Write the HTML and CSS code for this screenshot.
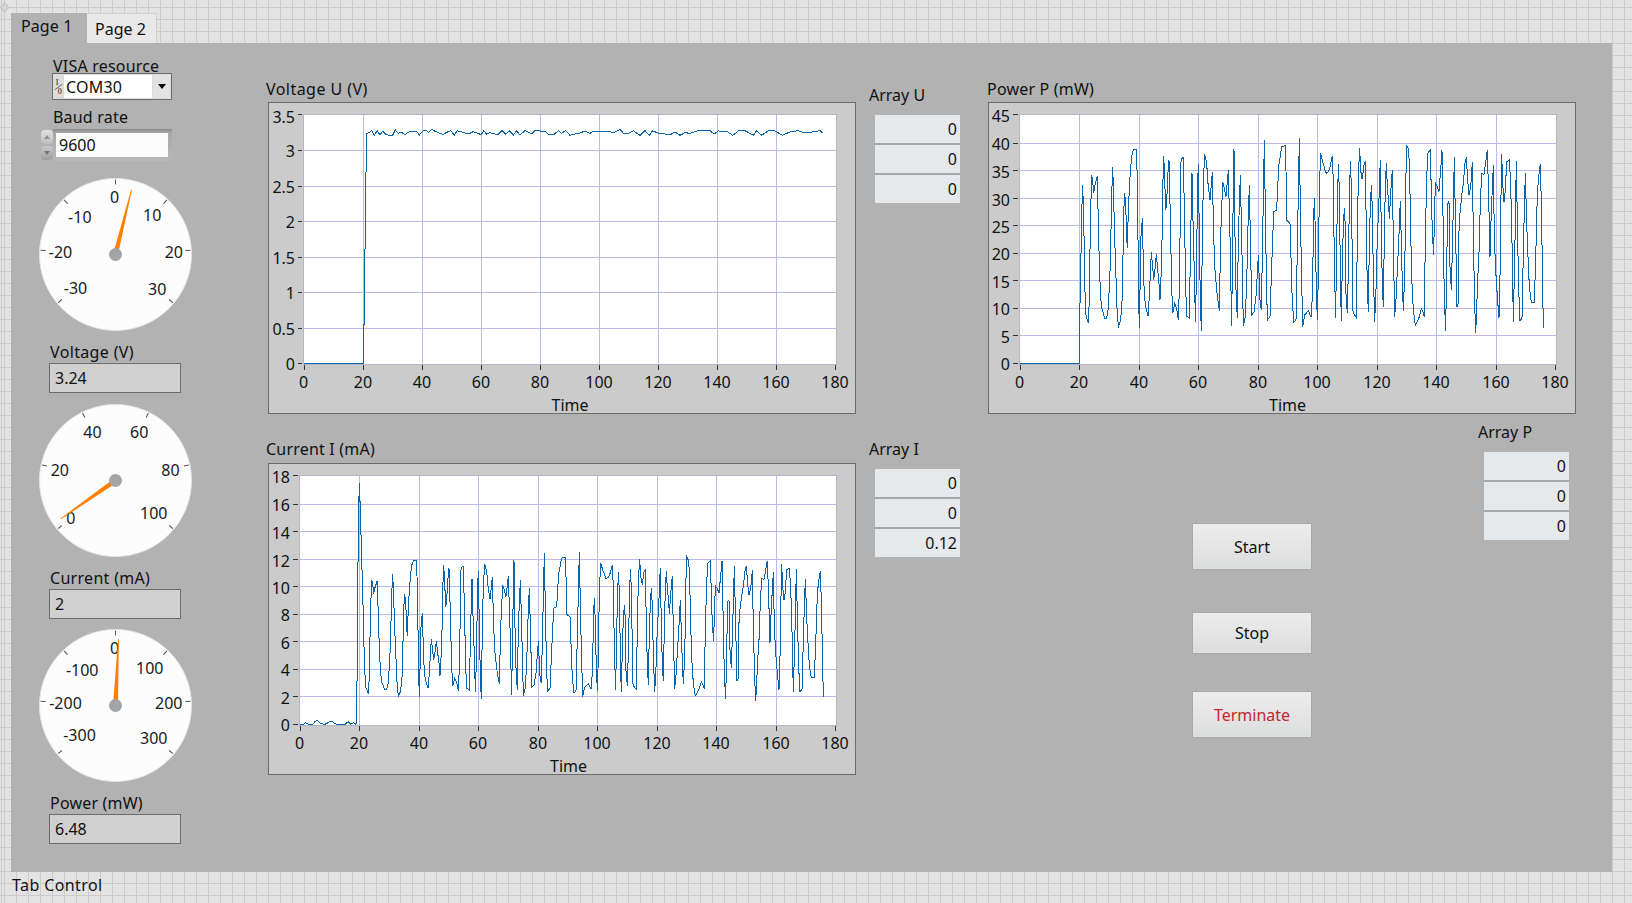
FILE: index.html
```html
<!DOCTYPE html>
<html lang="en">
<head>
<meta charset="utf-8">
<title>Front Panel</title>
<link rel="stylesheet" href="styles.css">
</head>
<body>
<div class="origin-mark"></div>
<div class="tabs">
  <div class="tab tab-active">Page 1</div>
  <div class="tab tab-idle">Page 2</div>
</div>
<main class="panel">
  <section class="sidebar">
    <div class="lbl visa-label">VISA resource</div>
    <div class="visa">
      <svg class="io" viewBox="0 0 10 23"><text class="io-t" x="3.5" y="10">I</text><line x1="1" y1="15" x2="9" y2="9" class="io-s"/><text class="io-t" x="6.5" y="20">0</text></svg>
      <div class="visa-val">COM30</div>
      <div class="visa-btn"><span class="arrow"></span></div>
    </div>
    <div class="lbl baud-label">Baud rate</div>
    <div class="baud">
      <div class="spin"><div class="spin-b spin-up"><span></span></div><div class="spin-b spin-dn"><span></span></div></div>
      <div class="baud-box"><div class="baud-val">9600</div></div>
    </div>

    <svg class="gauge g1" viewBox="-76.5 -76.5 153 153">
      <circle class="dial" r="76"/>
      <g class="ticks">
        <line y1="-75" y2="-70"/><line y1="-75" y2="-70" transform="rotate(43.3)"/><line y1="-75" y2="-70" transform="rotate(86.7)"/><line y1="-75" y2="-70" transform="rotate(130)"/><line y1="-75" y2="-70" transform="rotate(-43.3)"/><line y1="-75" y2="-70" transform="rotate(-86.7)"/><line y1="-75" y2="-70" transform="rotate(-130)"/>
      </g>
      <g class="gl">
        <text x="-1" y="-57.3">0</text><text x="-35.7" y="-37.3">-10</text><text x="36.7" y="-39.7">10</text><text x="-55" y="-3">-20</text><text x="58.3" y="-3">20</text><text x="-40" y="33">-30</text><text x="41.7" y="34">30</text>
      </g>
      <polygon class="needle" points="2.4,.6 -2.4,-.6 15.6,-64.8 16.4,-64.6"/>
      <circle class="hub" r="6.5"/>
    </svg>
    <div class="lbl ro-label first-ro">Voltage (V)</div>
    <div class="ro">3.24</div>

    <svg class="gauge g2" viewBox="-76.5 -76.5 153 153">
      <circle class="dial" r="76"/>
      <g class="ticks">
        <line y1="-75" y2="-70" transform="rotate(-130)"/><line y1="-75" y2="-70" transform="rotate(-78)"/><line y1="-75" y2="-70" transform="rotate(-26)"/><line y1="-75" y2="-70" transform="rotate(26)"/><line y1="-75" y2="-70" transform="rotate(78)"/><line y1="-75" y2="-70" transform="rotate(130)"/>
      </g>
      <g class="gl">
        <text x="-23" y="-49">40</text><text x="23.7" y="-49">60</text><text x="-55.7" y="-11">20</text><text x="55" y="-11">80</text><text x="-44.7" y="37.3">0</text><text x="38.3" y="32.7">100</text>
      </g>
      <polygon class="needle" points="1.4,2 -1.4,-2 -54.9,37.9 -54.5,38.7"/>
      <circle class="hub" r="6.5"/>
    </svg>
    <div class="lbl ro-label ro-wide">Current (mA)</div>
    <div class="ro">2</div>

    <svg class="gauge g3" viewBox="-76.5 -76.5 153 153">
      <circle class="dial" r="76"/>
      <g class="ticks">
        <line y1="-75" y2="-70"/><line y1="-75" y2="-70" transform="rotate(43.3)"/><line y1="-75" y2="-70" transform="rotate(86.7)"/><line y1="-75" y2="-70" transform="rotate(130)"/><line y1="-75" y2="-70" transform="rotate(-43.3)"/><line y1="-75" y2="-70" transform="rotate(-86.7)"/><line y1="-75" y2="-70" transform="rotate(-130)"/>
      </g>
      <g class="gl">
        <text x="-1" y="-57.3">0</text><text x="-33.3" y="-36">-100</text><text x="34.3" y="-38">100</text><text x="-50" y="-3">-200</text><text x="53.3" y="-3">200</text><text x="-36" y="29.5">-300</text><text x="38.3" y="32">300</text>
      </g>
      <polygon class="needle" points="2.5,.1 -2.5,-.1 2.6,-66.4 3.4,-66.4"/>
      <circle class="hub" r="6.5"/>
    </svg>
    <div class="lbl ro-label">Power (mW)</div>
    <div class="ro">6.48</div>
  </section>

  <section class="charts">
    <div class="lbl chart-label chart-label-u">Voltage U (V)</div>
    <svg class="chart" viewBox="269 103 586 310">
      <rect class="plot" x="303.5" y="114.5" width="533" height="250"/>
      <g class="grid">
        <path d="M363.5 115V364M422.5 115V364M481.5 115V364M540.5 115V364M599.5 115V364M658.5 115V364M717.5 115V364M776.5 115V364"/>
        <path d="M304 150.5H836M304 186.5H836M304 221.5H836M304 257.5H836M304 292.5H836M304 328.5H836"/>
      </g>
      <path class="tick" d="M298 114.5H302M298 150.5H302M298 186.5H302M298 221.5H302M298 257.5H302M298 292.5H302M298 328.5H302M298 363.5H302M304.5 365V370M363.5 365V370M422.5 365V370M481.5 365V370M540.5 365V370M599.5 365V370M658.5 365V370M717.5 365V370M776.5 365V370M835.5 365V370"/>
      <g class="yl">
        <text x="295" y="116.5">3.5</text><text x="295" y="151">3</text><text x="295" y="187">2.5</text><text x="295" y="222">2</text><text x="295" y="258">1.5</text><text x="295" y="293">1</text><text x="295" y="329">0.5</text><text x="295" y="364">0</text>
      </g>
      <g class="xl">
        <text x="303.5" y="382">0</text><text x="363" y="382">20</text><text x="422" y="382">40</text><text x="481" y="382">60</text><text x="540" y="382">80</text><text x="599" y="382">100</text><text x="658" y="382">120</text><text x="717" y="382">140</text><text x="776" y="382">160</text><text x="835" y="382">180</text>
        <text x="570" y="405">Time</text>
      </g>
      <g transform="translate(260 70) scale(.33333)">
        <polyline class="trace" points="131,880 310,880 310,765 313,765 313,540 316,535 316,310 319,305 319,190 327,188 335,182 343,195 352,182 360,195 368,184 376,192 385,195 398,196 406,180 415,190 425,187 435,195 443,187 455,184 470,184 478,195 488,183 497,180 506,187 515,178 525,184 540,190 550,193 560,187 572,182 583,195 592,182 605,186 625,192 640,185 655,190 663,195 672,182 680,193 690,188 705,192 715,193 726,182 738,193 748,182 760,195 770,182 780,195 795,182 805,186 815,192 825,182 855,184 868,195 880,195 895,182 905,190 917,182 930,196 945,192 958,190 975,183 990,190"/>
      </g>
      <g transform="translate(590 70) scale(.33333)">
        <polyline class="trace" points="0,190 8,185 28,186 40,185 60,185 72,188 90,178 102,192 115,190 130,182 150,196 165,182 178,196 188,182 205,190 225,192 240,195 255,186 270,196 285,188 300,190 320,183 340,183 360,182 372,192 385,183 410,184 428,196 445,183 465,182 490,196 500,182 515,196 535,182 555,183 577,196 590,190 600,186 625,182 642,188 665,186 690,182 700,190"/>
      </g>
    </svg>

    <div class="lbl chart-label second">Current I (mA)</div>
    <svg class="chart" viewBox="269 463 586 310">
      <rect class="plot" x="299.5" y="474.5" width="537" height="250"/>
      <g class="grid">
        <path d="M359.5 475V724M419.5 475V724M478.5 475V724M538.5 475V724M597.5 475V724M657.5 475V724M716.5 475V724M776.5 475V724"/>
        <path d="M300 503.5H836M300 530.5H836M300 558.5H836M300 585.5H836M300 613.5H836M300 640.5H836M300 668.5H836M300 695.5H836"/>
      </g>
      <path class="tick" d="M293 474.5H298M293 503.5H298M293 530.5H298M293 558.5H298M293 585.5H298M293 613.5H298M293 640.5H298M293 668.5H298M293 695.5H298M293 723.5H298M300.5 725V730M359.5 725V730M419.5 725V730M478.5 725V730M538.5 725V730M597.5 725V730M657.5 725V730M716.5 725V730M776.5 725V730M835.5 725V730"/>
      <g class="yl">
        <text x="290" y="475.5">18</text><text x="290" y="503.5">16</text><text x="290" y="531.5">14</text><text x="290" y="559.5">12</text><text x="290" y="586.5">10</text><text x="290" y="613.5">8</text><text x="290" y="641.5">6</text><text x="290" y="668.5">4</text><text x="290" y="696.5">2</text><text x="290" y="723.5">0</text>
      </g>
      <g class="xl">
        <text x="299.5" y="742">0</text><text x="359" y="742">20</text><text x="419" y="742">40</text><text x="478" y="742">60</text><text x="538" y="742">80</text><text x="597" y="742">100</text><text x="657" y="742">120</text><text x="716" y="742">140</text><text x="776" y="742">160</text><text x="835" y="742">180</text>
        <text x="568.5" y="765">Time</text>
      </g>
      <g transform="translate(260 430) scale(.33333)">
        <polyline class="trace" points="119,880 130,880 137,875 145,880 158,880 165,872 173,868 181,878 195,880 208,873 215,870 225,878 232,880 255,880 265,872 272,880 280,875 288,880 291,760 293,520 295,280 298,155 300,210 303,310 306,415 309,520 311,610 314,720 318,770 325,788"/>
        <g transform="translate(0 205.04) scale(1 .767)"><use href="#p-body1"/></g>
      </g>
      <g transform="translate(580 430) scale(.33333)">
        <g transform="translate(0 205.04) scale(1 .767)"><use href="#p-body2"/></g>
      </g>
    </svg>
  </section>

  <section class="arrays">
    <div class="array">
      <div class="lbl array-label">Array U</div>
      <div class="cells"><div class="cell">0</div><div class="cell">0</div><div class="cell">0</div></div>
    </div>
    <div class="array array-i">
      <div class="lbl array-label">Array I</div>
      <div class="cells"><div class="cell">0</div><div class="cell">0</div><div class="cell">0.12</div></div>
    </div>
  </section>

  <section class="right">
    <div class="lbl chart-label">Power P (mW)</div>
    <svg class="chart power" viewBox="989 103 586 310">
      <rect class="plot" x="1019.5" y="114.5" width="537" height="250"/>
      <g class="grid">
        <path d="M1079.5 115V364M1139.5 115V364M1198.5 115V364M1258.5 115V364M1317.5 115V364M1377.5 115V364M1436.5 115V364M1496.5 115V364"/>
        <path d="M1020 143.5H1556M1020 170.5H1556M1020 198.5H1556M1020 225.5H1556M1020 253.5H1556M1020 280.5H1556M1020 308.5H1556M1020 335.5H1556"/>
      </g>
      <path class="tick" d="M1013 114.5H1018M1013 143.5H1018M1013 170.5H1018M1013 198.5H1018M1013 225.5H1018M1013 253.5H1018M1013 280.5H1018M1013 308.5H1018M1013 335.5H1018M1013 363.5H1018M1020.5 365V370M1079.5 365V370M1139.5 365V370M1198.5 365V370M1258.5 365V370M1317.5 365V370M1377.5 365V370M1436.5 365V370M1496.5 365V370M1555.5 365V370"/>
      <g class="yl">
        <text x="1010" y="116">45</text><text x="1010" y="144">40</text><text x="1010" y="172">35</text><text x="1010" y="200">30</text><text x="1010" y="227">25</text><text x="1010" y="254">20</text><text x="1010" y="282">15</text><text x="1010" y="309">10</text><text x="1010" y="337">5</text><text x="1010" y="364">0</text>
      </g>
      <g class="xl">
        <text x="1019.5" y="382">0</text><text x="1079" y="382">20</text><text x="1139" y="382">40</text><text x="1198" y="382">60</text><text x="1258" y="382">80</text><text x="1317" y="382">100</text><text x="1377" y="382">120</text><text x="1436" y="382">140</text><text x="1496" y="382">160</text><text x="1555" y="382">180</text>
        <text x="1287.5" y="405">Time</text>
      </g>
      <g transform="translate(980 70) scale(.33333)">
        <polyline class="trace" points="119,880 298,880 298,795 302,610 305,435 308,345 310,410 313,540 315,665 318,735 322,750 325,760"/>
        <polyline class="trace" id="p-body1" points="325,760 328,690 330,540 333,390 335,315 338,330 341,370 345,345 352,318 356,510 360,635 364,710 370,730 374,745 380,745 385,715 390,605 393,480 396,350 398,292 400,350 403,460 406,570 409,650 412,745 416,767 422,750 427,680 429,560 431,430 434,370 437,400 440,500 442,535 445,420 449,340 452,290 456,255 460,240 469,240 472,330 474,505 476,685 478,773 481,610 483,500 487,445 490,580 493,680 498,715 504,738 508,680 511,610 514,547 518,590 521,630 526,590 529,553 533,600 537,640 540,690 544,600 547,470 550,258 553,290 557,420 560,400 563,320 567,270 570,400 572,500 575,650 578,730 584,700 590,715 595,750 599,630 602,280 606,265 610,262 614,470 617,650 620,738 628,745 632,500 636,310 640,500 644,640 646,755 650,600 652,365 655,282 658,500 661,690 664,782 667,500 670,340 674,252 680,280 684,340 690,390 697,305 701,500 705,600 712,680 718,722 722,500 728,335 733,355 738,380 745,300 750,500 755,767 758,500 762,238 765,500 768,660 772,745 775,500 781,315 785,500 790,767 795,745 800,650 803,500 808,345 812,550 816,735 822,725 828,680 835,555 840,690 844,720 848,500 853,210 857,500 862,750 870,740 875,590 881,425 890,420 896,290 905,230 917,226 920,450 930,460 937,700 942,757 948,750 953,480 958,205 962,480 968,772"/>
      </g>
      <g transform="translate(1300 70) scale(.33333)">
        <polyline class="trace" id="p-body2" points="8,772 14,735 25,722 33,742 37,680 39,565 41,445 43,385 45,450 47,565 50,685 52,750 54,665 56,500 59,330 62,250 68,275 78,310 85,305 90,290 97,258 100,340 102,500 105,665 107,745 110,510 115,283 118,360 120,520 122,670 124,752 127,580 130,470 133,415 136,470 138,670 142,730 145,600 148,400 151,273 154,350 156,500 158,720 162,732 169,743 172,500 175,320 179,235 181,280 184,320 187,328 192,285 196,272 199,490 202,650 205,725 208,520 211,410 214,345 217,415 219,550 222,680 224,755 228,660 232,500 236,420 239,320 241,270 244,500 247,640 250,712 253,500 256,350 259,280 262,350 266,400 268,448 272,370 277,300 280,520 282,630 284,740 288,690 292,600 296,520 299,440 301,393 304,520 307,640 310,722 313,640 316,500 318,310 320,225 326,240 329,310 332,490 336,640 340,720 346,767 352,755 358,740 364,715 369,725 373,742 376,500 380,330 383,250 391,240 394,370 397,490 401,555 404,400 407,340 412,350 417,365 422,300 426,240 430,500 433,685 437,782 440,600 443,400 447,395 450,590 454,660 458,500 463,262 467,500 471,710 474,710 476,500 480,430 486,370 490,340 495,280 499,262 503,330 507,375 512,350 517,277 520,500 524,700 527,790 530,720 533,630 537,550 541,400 545,310 552,313 558,270 562,240 566,380 570,560 574,420 578,335 580,285 583,500 587,600 592,680 597,745 600,620 603,380 605,252 608,340 612,395 616,360 620,275 628,270 632,340 636,515 640,755 645,515 649,273 653,515 657,680 660,752 666,745 671,500 676,310 680,460 684,560 688,650 694,698 703,697 708,530 712,370 716,320 721,282 725,440 728,680 731,773"/>
      </g>
    </svg>
    <div class="lower">
      <div class="buttons">
        <button class="btn btn-start">Start</button>
        <button class="btn btn-stop">Stop</button>
        <button class="btn btn-term">Terminate</button>
      </div>
      <div class="array array-p">
        <div class="lbl array-label">Array P</div>
        <div class="cells"><div class="cell">0</div><div class="cell">0</div><div class="cell">0</div></div>
      </div>
    </div>
  </section>
</main>
<div class="lbl caption">Tab Control</div>
</body>
</html>
```
FILE: styles.css
```css
* { box-sizing: border-box; }
html, body { margin: 0; height: 100%; }
body {
  height: 903px;
  overflow: hidden;
  padding: 13px 0 0 11px;
  font-family: "Noto Sans", "Open Sans", sans-serif;
  font-size: 16px;
  color: #111;
  background-color: #e3e3e3;
  background-image:
    linear-gradient(90deg, transparent 1px, #cbcbcb 1px 2px, transparent 2px),
    repeating-linear-gradient(90deg, transparent 0 4.4px, #cbcbcb 4.4px 5.4px, transparent 5.4px 11.994px),
    repeating-linear-gradient(180deg, transparent 0 7px, #cbcbcb 7px 8px, transparent 8px 12px);
}
.origin-mark {
  position: absolute;
  left: 1px;
  top: 4px;
  width: 7px;
  height: 7px;
  transform: rotate(45deg);
  background: #d6d6d6;
  border: 1px solid #c4c4c4;
}
.lbl { height: 15px; line-height: 17px; white-space: nowrap; }

/* tabs */
.tabs { display: flex; height: 30px; }
.tab { line-height: 30px; }
.tab-active { width: 76px; background: #b2b2b2; padding-left: 10px; line-height: 27px; letter-spacing: .1px; }
.tab-idle {
  width: 70px;
  padding-left: 8px;
  background: #e8e8e8;
  border-top: 1px solid #cfcfcf;
  border-right: 1px solid #cfcfcf;
}

/* panel */
.panel {
  display: flex;
  width: 1601px;
  height: 829px;
  background: #b2b2b2;
}
.sidebar {
  width: 153px;
  margin-left: 28px;
  padding-top: 15px;
  flex: none;
  display: flex;
  flex-direction: column;
  align-items: flex-start;
}
.visa-label { margin-left: 14px; letter-spacing: .2px; }
.visa {
  display: flex;
  align-items: stretch;
  width: 120px;
  height: 27px;
  margin-left: 13px;
  padding: 1px;
  gap: 1px;
  border: 1px solid #6c6c6c;
  background: #dcdcdc;
}
.io { width: 9px; height: 23px; flex: none; }
.io-t { font-size: 9px; text-anchor: middle; fill: #111; font-family: "Liberation Serif", serif; }
.io-s { stroke: #333; stroke-width: .8; }
.visa-val { flex: 1; background: #fff; padding-left: 2px; line-height: 25px; letter-spacing: .2px; }
.visa-btn {
  width: 17px;
  background: #e2e2e2;
  display: flex;
  align-items: center;
  justify-content: center;
}
.arrow {
  width: 0;
  height: 0;
  border-left: 4.5px solid transparent;
  border-right: 4.5px solid transparent;
  border-top: 5px solid #000;
}
.baud-label { margin: 9px 0 5px 14px; letter-spacing: .2px; }
.baud { display: flex; margin-left: 2px; height: 32px; }
.spin { width: 12px; display: flex; flex-direction: column; gap: 2px; padding-top: 1px; }
.spin-b {
  height: 14px;
  border-radius: 4px;
  display: flex;
  align-items: center;
  justify-content: center;
}
.spin-up { background: linear-gradient(#e2e2e2, #bdbdbd); }
.spin-dn { background: linear-gradient(#c8c8c8, #9e9e9e); }
.spin-b span { width: 0; height: 0; border-left: 3px solid transparent; border-right: 3px solid transparent; }
.spin-up span { border-bottom: 4px solid #8f8f8f; }
.spin-dn span { border-top: 4px solid #777; }
.baud-box {
  width: 119px;
  padding: 4px 4px 4px 3px;
  background: linear-gradient(#8c8c8c 0, #a8a8a8 4px, #b8b8b8 100%);
}
.baud-val { height: 24px; background: #fbfbfb; padding-left: 3px; line-height: 25px; }

.gauge { width: 153px; height: 153px; flex: none; display: block; }
.g1 { margin-top: 17px; }
.g2 { margin-top: 11px; }
.g3 { margin-top: 10px; }
.dial { fill: #fcfcfc; stroke: #e4e4e4; stroke-width: 1; }
.ticks line { stroke: #555; stroke-width: 1; }
.gl text { font-size: 16px; text-anchor: middle; dominant-baseline: central; fill: #1a1a1a; }
.needle { fill: #ff7f00; }
.hub { fill: #a3a4a7; }
.ro-label { margin: 13px 0 4px 11px; letter-spacing: .2px; }
.first-ro { margin-top: 13px; margin-bottom: 4px; letter-spacing: .35px; }
.ro-wide { letter-spacing: .3px; }
.ro {
  width: 132px;
  height: 30px;
  margin-left: 10px;
  padding-left: 5px;
  line-height: 28px;
  background: #d0d0d0;
  border: 1px solid #6c6c6c;
}

/* charts */
.charts { width: 590px; margin-left: 74px; padding-top: 38px; flex: none; }
.chart-label { margin-bottom: 6px; letter-spacing: .2px; }
.chart-label-u { letter-spacing: .45px; }
.chart-label.second { margin-top: 27px; margin-bottom: 7px; }
.chart {
  display: block;
  width: 588px;
  height: 312px;
  margin-left: 2px;
  overflow: visible;
  background: #cbcbcb;
  border: 1px solid #6c6c6c;
}
.chart.power { margin-left: 1px; }
.plot { fill: #fff; stroke: #b4b4c4; stroke-width: 1; }
.grid path { stroke: #b9b9ea; stroke-width: 1; fill: none; }
.tick { stroke: #333; stroke-width: 1; fill: none; }
.yl text { font-size: 16px; text-anchor: end; dominant-baseline: central; fill: #111; }
.xl text { font-size: 16px; text-anchor: middle; dominant-baseline: central; fill: #111; }
.trace {
  fill: none;
  stroke: #0b64a9;
  stroke-width: 1;
  vector-effect: non-scaling-stroke;
  shape-rendering: crispEdges;
}

/* arrays */
.arrays { width: 91px; margin-left: 13px; padding-top: 44px; flex: none; }
.array-i { margin-top: 238px; }
.array-label { margin-bottom: 13px; }
.cells {
  width: 85px;
  margin-left: 6px;
  display: flex;
  flex-direction: column;
  gap: 2px;
  background: #a7a8aa;
}
.cell {
  height: 28px;
  padding-right: 3px;
  text-align: right;
  line-height: 29px;
  background: #e6e9ec;
}

/* right column */
.right { margin-left: 27px; padding-top: 38px; flex: none; }
.lower { display: flex; align-items: flex-start; }
.buttons {
  display: flex;
  flex-direction: column;
  width: 120px;
  margin-left: 205px;
  padding-top: 109px;
}
.btn {
  width: 120px;
  padding: 0;
  font: inherit;
  color: #111;
  background: linear-gradient(#ececec, #dcddde);
  border: 1px solid #a9a9a9;
}
.btn-start { height: 47px; }
.btn-stop { height: 42px; margin-top: 42px; }
.btn-term { height: 47px; margin-top: 37px; color: #c9252d; }
.array-p { margin: 10px 0 0 166px; }
.caption { margin: 5px 0 0 1px; letter-spacing: .4px; }
```
